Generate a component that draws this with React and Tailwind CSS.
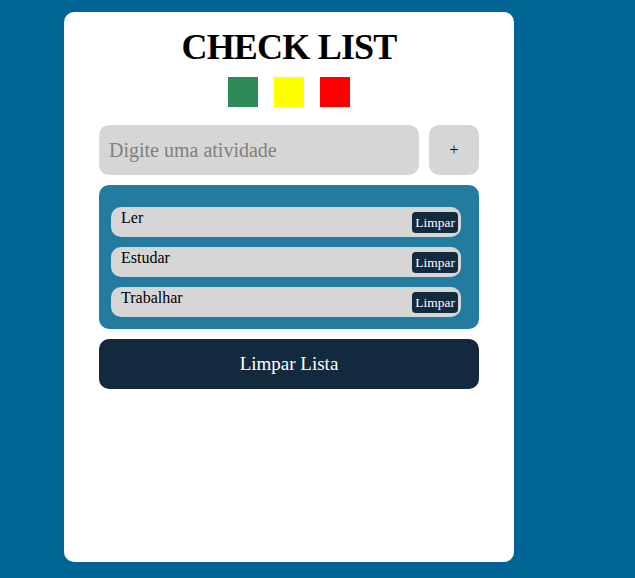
import React from 'react';

const items = ['Ler', 'Estudar', 'Trabalhar'];

export default function App() {
    return (
        <div className="min-h-[578px] bg-[#006494] pt-[12px] pl-[64px] font-['Liberation_Serif',serif]">
            <div className="w-[450px] h-[550px] bg-white rounded-[10px] flex flex-col items-center">
                <h1 className="mt-[12px] text-[36px] leading-[46px] font-bold text-black tracking-[-0.8px]">CHECK LIST</h1>
                <div className="flex gap-[16px] mt-[7px]">
                    <div className="w-[30px] h-[30px] bg-[#2e8b57]" />
                    <div className="w-[30px] h-[30px] bg-[#ffff00]" />
                    <div className="w-[30px] h-[30px] bg-[#ff0000]" />
                </div>
                <div className="w-[380px] mt-[18px] flex gap-[10px]">
                    <input
                        className="w-[320px] h-[50px] bg-[#d6d6d6] rounded-[10px] px-[10px] text-[20px] text-black placeholder:text-[#808080] outline-none"
                        placeholder="Digite uma atividade"
                    />
                    <button className="w-[50px] h-[50px] bg-[#d6d6d6] rounded-[10px] text-[16px] text-black">+</button>
                </div>
                <div className="w-[380px] mt-[10px] bg-[#247ba0] rounded-[10px] px-[12px] pt-[22px] pb-[12px] flex flex-col gap-[10px]">
                    {items.map((item) => (
                        <div key={item} className="w-[350px] h-[30px] bg-[#d6d6d6] rounded-[10px] flex justify-between pl-[10px] pr-[3px]">
                            <span className="text-[16px] leading-[18px] pt-[2px] text-black">{item}</span>
                            <button className="self-end mb-[4px] h-[21px] px-[3px] bg-[#13293d] rounded-[4px] text-white text-[13.5px] leading-[21px]">Limpar</button>
                        </div>
                    ))}
                </div>
                <button className="w-[380px] h-[50px] mt-[10px] bg-[#13293d] rounded-[10px] text-white text-[19px]">Limpar Lista</button>
            </div>
        </div>
    );
}
